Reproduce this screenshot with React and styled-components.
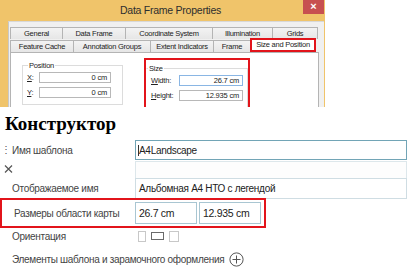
import styled, { createGlobalStyle } from "styled-components";

const GlobalStyle = createGlobalStyle`
  html, body {
    margin: 0;
    padding: 0;
    background: #ffffff;
  }
  body {
    width: 407px;
    height: 268px;
    overflow: hidden;
    font-family: "Liberation Sans", Arial, sans-serif;
  }
`;

const tabsTop = [
  { label: "General", width: 53 },
  { label: "Data Frame", width: 64 },
  { label: "Coordinate System", width: 88 },
  { label: "Illumination", width: 61 },
  { label: "Grids", width: 46 },
];

const tabsBottom = [
  { label: "Feature Cache", width: 64 },
  { label: "Annotation Groups", width: 78 },
  { label: "Extent Indicators", width: 64 },
  { label: "Frame", width: 38 },
  { label: "Size and Position", width: 66, selected: true },
];

export default function App() {
  return (
    <Page>
      <GlobalStyle />
      <Dialog>
        <TitleBar>
          <span />
          <Title>Data Frame Properties</Title>
          <CloseButton>×</CloseButton>
        </TitleBar>
        <WindowBody>
          <TabRow>
            {tabsTop.map((t) => (
              <Tab key={t.label} $width={t.width}>
                {t.label}
              </Tab>
            ))}
          </TabRow>
          <TabRow $second>
            {tabsBottom.map((t) =>
              t.selected ? (
                <SelectedTab key={t.label} $width={t.width}>
                  {t.label}
                </SelectedTab>
              ) : (
                <Tab key={t.label} $width={t.width}>
                  {t.label}
                </Tab>
              )
            )}
          </TabRow>
          <TabPage>
            <GroupBox $width={101}>
              <legend>Position</legend>
              <FieldRow>
                <FieldLabel $width={12}>
                  <u>X</u>:
                </FieldLabel>
                <SmallInput>0 cm</SmallInput>
              </FieldRow>
              <FieldRow>
                <FieldLabel $width={12}>
                  <u>Y</u>:
                </FieldLabel>
                <SmallInput>0 cm</SmallInput>
              </FieldRow>
            </GroupBox>
            <RedFrame>
              <GroupBox $width={102} $bare>
                <legend>Size</legend>
                <FieldRow>
                  <FieldLabel $width={28}>
                    <u>W</u>idth:
                  </FieldLabel>
                  <SmallInput $focused>26.7 cm</SmallInput>
                </FieldRow>
                <FieldRow>
                  <FieldLabel $width={28}>
                    <u>H</u>eight:
                  </FieldLabel>
                  <SmallInput>12.935 cm</SmallInput>
                </FieldRow>
              </GroupBox>
            </RedFrame>
          </TabPage>
        </WindowBody>
      </Dialog>

      <Heading>Конструктор</Heading>

      <Form>
        <FormRow>
          <Label>
            <Handle>⋮</Handle>Имя шаблона
          </Label>
          <TextBox $focused>
            <Caret />
            A4Landscape
          </TextBox>
        </FormRow>
        <FormRow $height={18}>
          <RemoveIcon width="9" height="8" viewBox="0 0 9 8">
            <path d="M1 0.5 L8 7.5 M8 0.5 L1 7.5" stroke="#555" strokeWidth="1.2" />
          </RemoveIcon>
          <BlankBox />
        </FormRow>
        <FormRow>
          <Label>Отображаемое имя</Label>
          <TextBox $soft>Альбомная А4 НТО с легендой</TextBox>
        </FormRow>
        <SizeRow>
          <Label>Размеры области карты</Label>
          <SizeInputs>
            <SizeBox>26.7 cm</SizeBox>
            <SizeBox>12.935 cm</SizeBox>
          </SizeInputs>
        </SizeRow>
        <FormRow $height={16}>
          <Label>Ориентация</Label>
          <Orientation>
            <Sheet $w={8} $h={11} />
            <Sheet $w={13} $h={8} $active />
            <Sheet $w={10} $h={11} />
          </Orientation>
        </FormRow>
        <ElementsRow>
          Элементы шаблона и зарамочного оформления
          <svg width="15" height="15" viewBox="0 0 15 15">
            <circle cx="7.5" cy="7.5" r="6.6" fill="none" stroke="#555" strokeWidth="1" />
            <path d="M7.5 3.5 V11.5 M3.5 7.5 H11.5" stroke="#555" strokeWidth="1" />
          </svg>
        </ElementsRow>
      </Form>
    </Page>
  );
}

const Page = styled.div`
  width: 407px;
  height: 268px;
  display: flex;
  flex-direction: column;
  background: #ffffff;
`;

const Dialog = styled.div`
  width: 325px;
  height: 107px;
  flex: none;
  background: #f0c46a;
  display: flex;
  flex-direction: column;
  overflow: hidden;
`;

const TitleBar = styled.div`
  height: 21px;
  flex: none;
  display: grid;
  grid-template-columns: 1fr auto 1fr;
  align-items: start;
`;

const Title = styled.span`
  font-size: 10.5px;
  letter-spacing: -0.25px;
  line-height: 21px;
  color: #2e2e2e;
  padding-left: 16px;
`;

const CloseButton = styled.div`
  justify-self: end;
  width: 21px;
  height: 14px;
  margin-right: 1px;
  background: #c75050;
  color: #ffffff;
  font-size: 11px;
  font-weight: bold;
  line-height: 13px;
  text-align: center;
`;

const WindowBody = styled.div`
  flex: 1;
  margin: 0 1px 0 8px;
  background: #f0f0f0;
  border-left: 1px solid #c8c8c8;
  border-top: 1px solid #d8d8d8;
  padding: 5px 5px 0 1px;
  display: flex;
  flex-direction: column;
`;

const TabRow = styled.div`
  display: flex;
  align-items: flex-end;
  height: ${(p) => (p.$second ? 13 : 12)}px;
`;

const Tab = styled.div`
  width: ${(p) => p.$width}px;
  height: 12px;
  box-sizing: border-box;
  margin-right: -1px;
  border: 1px solid #b4b4b4;
  border-bottom: none;
  background: linear-gradient(#f3f3f3, #e6e6e6);
  font-size: 7.5px;
  letter-spacing: -0.25px;
  line-height: 11px;
  color: #222;
  text-align: center;
  white-space: nowrap;
`;

const SelectedTab = styled(Tab)`
  height: 14px;
  border: 2px solid #e2141b;
  background: #ffffff;
  line-height: 10px;
  position: relative;
  z-index: 1;
`;

const TabPage = styled.div`
  width: 309px;
  flex: 1;
  box-sizing: border-box;
  background: #ffffff;
  border: 1px solid #b4b4b4;
  padding: 5px 0 0 11px;
  display: flex;
  align-items: flex-start;
  gap: 21px;
`;

const GroupBox = styled.fieldset`
  width: ${(p) => p.$width}px;
  box-sizing: border-box;
  margin: ${(p) => (p.$bare ? "0" : "3px 0 0 0")};
  padding: 2px 4px 6px 4px;
  border: 1px solid #dcdcdc;
  border-left-color: ${(p) => (p.$bare ? "transparent" : "#dcdcdc")};
  display: flex;
  flex-direction: column;
  gap: 4px;
  min-width: 0;

  legend {
    font-size: 7.5px;
    letter-spacing: -0.2px;
    color: #222;
    padding: 0 1px;
    margin-left: ${(p) => (p.$bare ? "-3px" : "1px")};
    line-height: 9px;
  }
`;

const RedFrame = styled.div`
  width: 106px;
  height: 60px;
  box-sizing: border-box;
  border: 2px solid #e2141b;
  padding: 4px 0 0 0;
`;

const FieldRow = styled.div`
  display: flex;
  align-items: center;
  height: 11px;
`;

const FieldLabel = styled.span`
  width: ${(p) => p.$width}px;
  flex: none;
  font-size: 7.5px;
  letter-spacing: -0.2px;
  color: #222;
`;

const SmallInput = styled.div`
  width: 72px;
  height: 11px;
  box-sizing: border-box;
  border: 1px solid ${(p) => (p.$focused ? "#8ab6e4" : "#b8b8b8")};
  font-size: 7.5px;
  letter-spacing: -0.2px;
  line-height: 9px;
  text-align: right;
  padding-right: 3px;
  color: #222;
`;

const Heading = styled.h1`
  margin: 6px 0 0 5px;
  font-family: "Liberation Serif", "Times New Roman", serif;
  font-size: 19px;
  font-weight: bold;
  line-height: 22px;
  color: #000;
`;

const Form = styled.div`
  display: flex;
  flex-direction: column;
  margin-top: 5px;
  font-size: 10px;
  letter-spacing: -0.3px;
  color: #444;
`;

const FormRow = styled.div`
  display: grid;
  grid-template-columns: 135px 1fr;
  align-items: center;
  height: ${(p) => p.$height || 20}px;
`;

const Label = styled.div`
  padding-left: 12px;
  position: relative;
  white-space: nowrap;
`;

const Handle = styled.span`
  position: absolute;
  left: 1px;
  top: -1px;
  color: #555;
`;

const RemoveIcon = styled.svg`
  margin-left: 4px;
`;

const TextBox = styled.div`
  height: ${(p) => (p.$soft ? 21 : 20)}px;
  box-sizing: border-box;
  border: 1px solid ${(p) => (p.$focused ? "#72a5b6" : "#cfdde3")};
  display: flex;
  align-items: center;
  padding-left: ${(p) => (p.$focused ? 2 : 3)}px;
  color: #222;
  background: #fff;
`;

const BlankBox = styled.div`
  height: 17px;
  box-sizing: border-box;
  border: 1px solid #dde7eb;
  border-bottom: none;
  background: #fdfdfd;
`;

const Caret = styled.span`
  width: 1px;
  height: 11px;
  background: #333;
`;

const SizeRow = styled.div`
  width: 266px;
  height: 30px;
  box-sizing: border-box;
  border: 2px solid #e2141b;
  display: grid;
  grid-template-columns: 133px 1fr;
  align-items: center;
`;

const SizeInputs = styled.div`
  display: flex;
  gap: 2px;
`;

const SizeBox = styled.div`
  width: 62px;
  height: 22px;
  box-sizing: border-box;
  border: 1px solid #a9c6d2;
  display: flex;
  align-items: center;
  padding-left: 3px;
  font-size: 10.5px;
  color: #222;
`;

const Orientation = styled.div`
  display: flex;
  align-items: center;
  gap: 5px;
  padding-left: 3px;
`;

const Sheet = styled.div`
  width: ${(p) => p.$w}px;
  height: ${(p) => p.$h}px;
  box-sizing: border-box;
  border: 1px solid ${(p) => (p.$active ? "#6a6a6a" : "#c8c8c8")};
`;

const ElementsRow = styled.div`
  display: flex;
  align-items: center;
  gap: 5px;
  height: 30px;
  padding-left: 12px;
  white-space: nowrap;
`;
